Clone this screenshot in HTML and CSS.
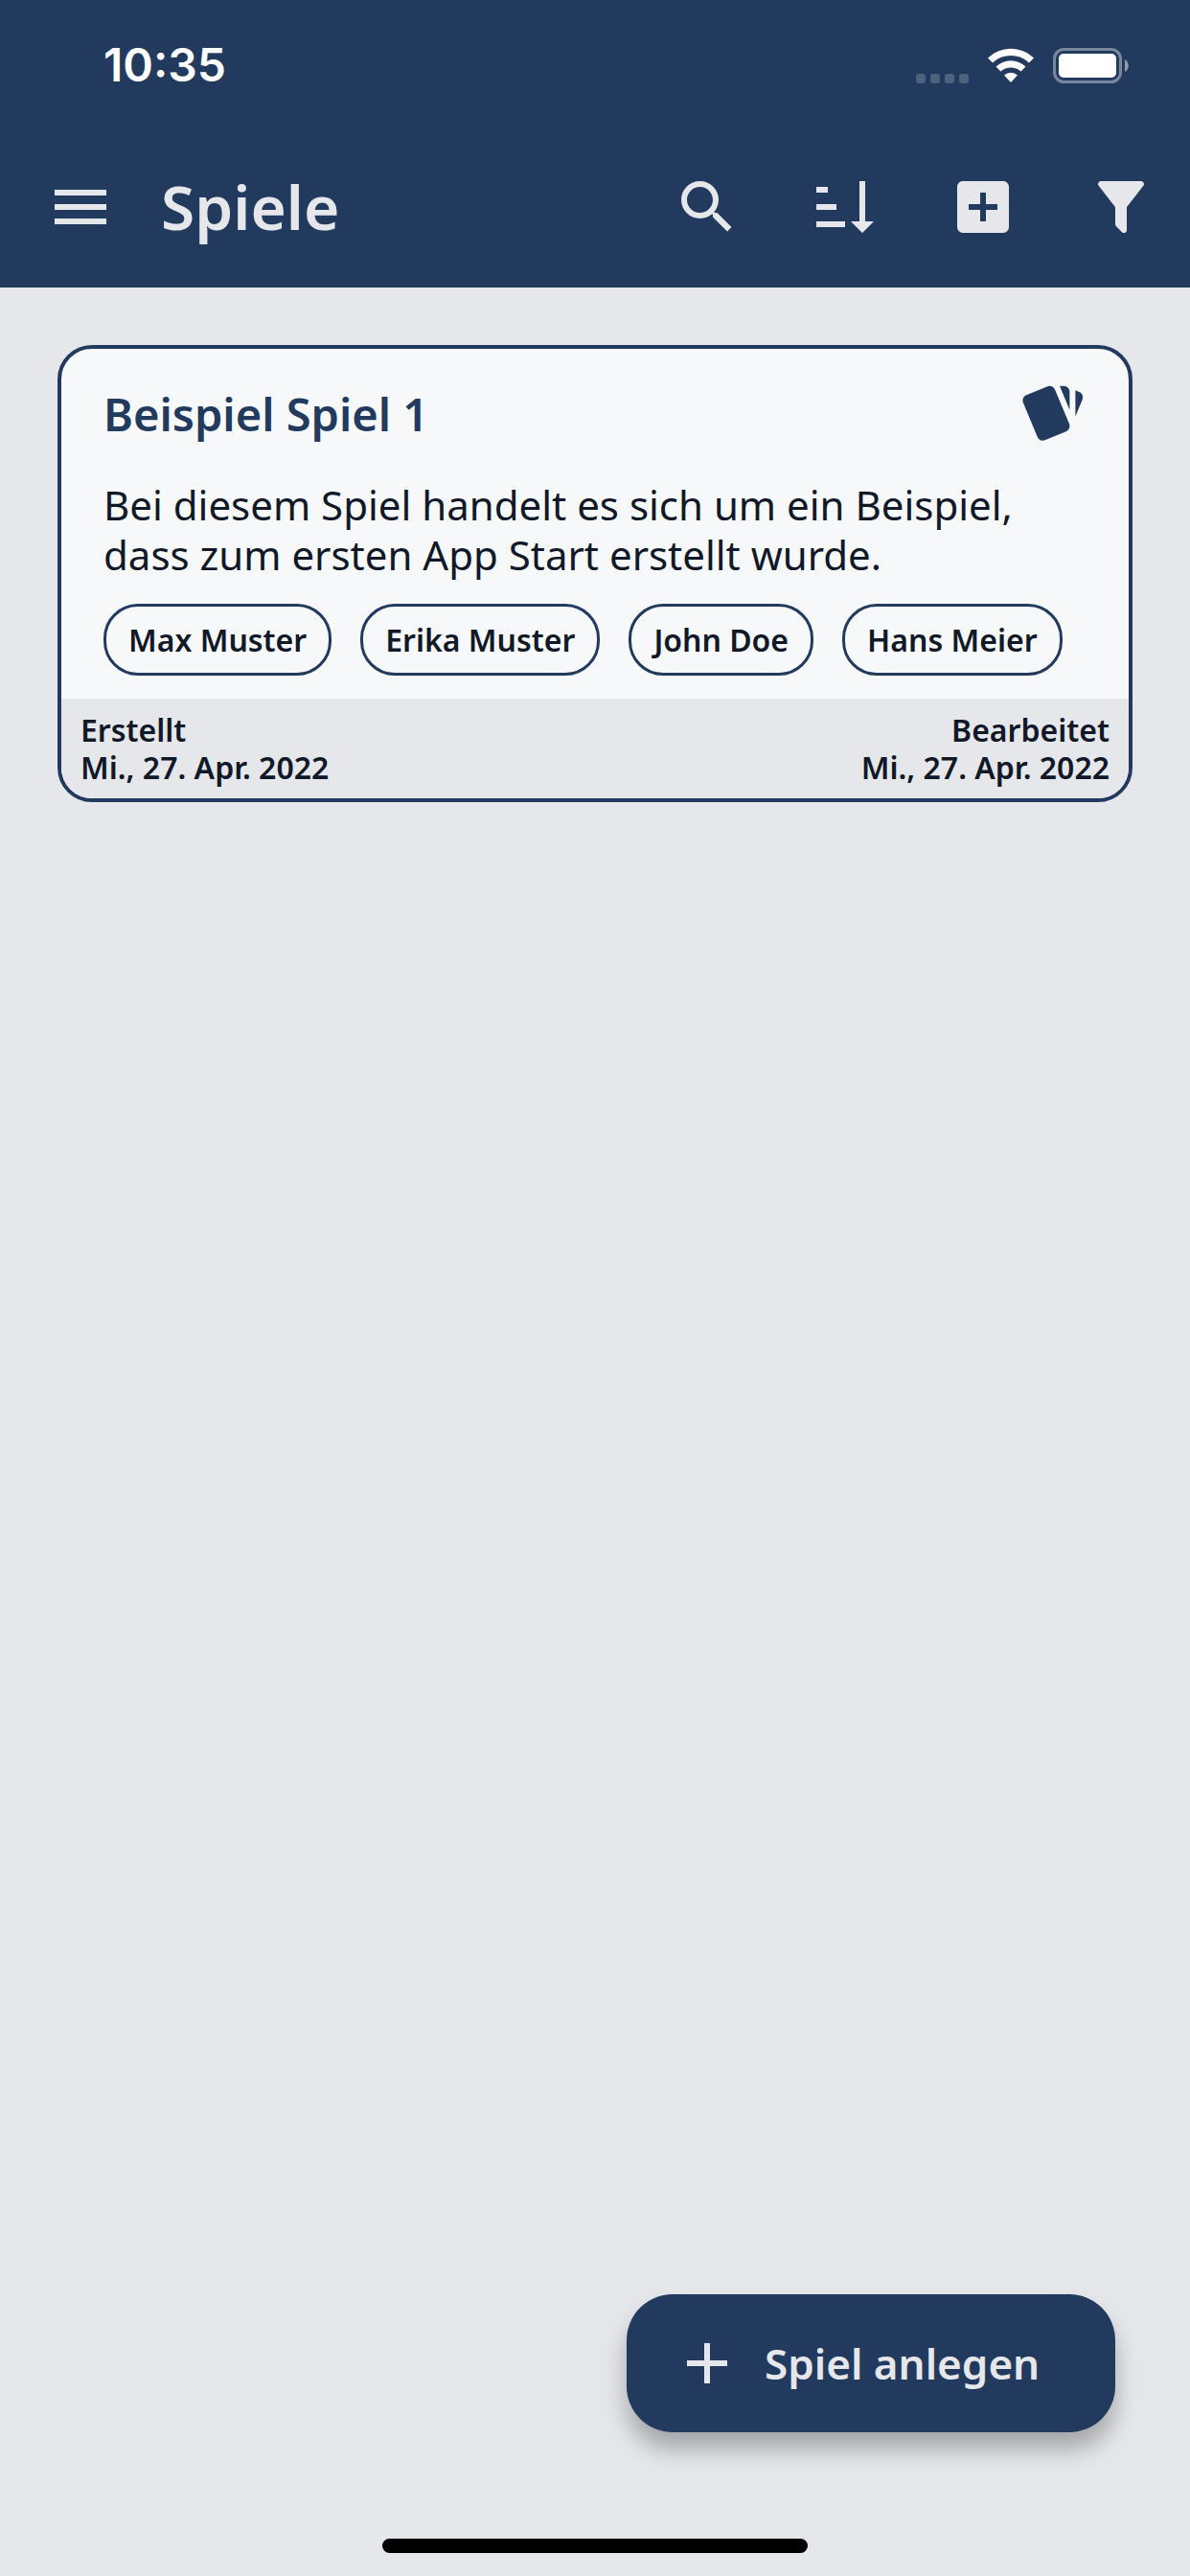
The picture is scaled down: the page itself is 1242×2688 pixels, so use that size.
FILE: index.html
```html
<!DOCTYPE html>
<html lang="de">
<head>
<meta charset="utf-8">
<meta name="viewport" content="width=device-width, initial-scale=1">
<title>Spiele</title>
<link rel="stylesheet" href="styles.css">
</head>
<body>
<div class="app">
  <header class="header">
    <div class="status">
      <time class="status-time">10:35</time>
      <div class="status-icons">
        <svg class="signal" viewBox="0 0 55 10" aria-hidden="true"><rect width="10" height="10" rx="3"/><rect x="15" width="10" height="10" rx="3"/><rect x="30" width="10" height="10" rx="3"/><rect x="45" width="10" height="10" rx="3"/></svg>
        <svg class="wifi" viewBox="0 0 48 37" aria-hidden="true"><path d="M0 10.500A34.500 34.500 0 0 1 48 10.500L43 15.500A27.500 27.500 0 0 0 5 15.500ZM8.500 19.500A22.500 22.500 0 0 1 39.500 19.500L34.500 24.500A15.500 15.500 0 0 0 13.500 24.500ZM17 28.500A10.500 10.500 0 0 1 31 28.500L24 36Z"/></svg>
        <svg class="battery" viewBox="0 0 79 37" aria-hidden="true"><rect class="battery-case" x="1.500" y="1.500" width="69" height="34" rx="10"/><rect x="6" y="6" width="60" height="25" rx="5"/><path class="battery-tip" d="M75 12C80 15 80 22 75 25Z"/></svg>
      </div>
    </div>
    <nav class="bar">
      <button class="icon-button" type="button" aria-label="Menü"><svg class="icon" viewBox="0 0 24 24"><path d="M3,6H21V8H3V6M3,11H21V13H3V11M3,16H21V18H3V16Z"/></svg></button>
      <h1 class="bar-title">Spiele</h1>
      <div class="bar-actions">
        <button class="icon-button" type="button" aria-label="Suchen"><svg class="icon" viewBox="0 0 24 24"><path d="M9.5,3A6.5,6.5 0 0,1 16,9.5C16,11.11 15.41,12.59 14.44,13.73L14.71,14H15.5L20.5,19L19,20.5L14,15.5V14.71L13.73,14.44C12.59,15.41 11.11,16 9.5,16A6.5,6.5 0 0,1 3,9.5A6.5,6.5 0 0,1 9.5,3M9.5,5C7,5 5,7 5,9.5C5,12 7,14 9.5,14C12,14 14,12 14,9.5C14,7 12,5 9.5,5Z"/></svg></button>
        <button class="icon-button" type="button" aria-label="Sortieren"><svg class="icon" viewBox="0 0 24 24"><path d="M19 17H22L18 21L14 17H17V3H19M2 17H12V19H2M6 5V7H2V5M2 11H9V13H2V11Z"/></svg></button>
        <button class="icon-button" type="button" aria-label="Hinzufügen"><svg class="icon" viewBox="0 0 24 24"><path d="M17,13H13V17H11V13H7V11H11V7H13V11H17M19,3H5C3.89,3 3,3.89 3,5V19A2,2 0 0,0 5,21H19A2,2 0 0,0 21,19V5C21,3.89 20.1,3 19,3Z"/></svg></button>
        <button class="icon-button" type="button" aria-label="Filtern"><svg class="icon" viewBox="0 0 24 24"><path d="M14,12V19.88C14.04,20.18 13.94,20.5 13.71,20.71C13.32,21.1 12.69,21.1 12.3,20.71L10.29,18.7C10.06,18.47 9.96,18.16 10,17.87V12H9.97L4.21,4.62C3.87,4.19 3.95,3.56 4.38,3.22C4.57,3.08 4.78,3 5,3V3H19V3C19.22,3 19.43,3.08 19.62,3.22C20.05,3.56 20.13,4.19 19.79,4.62L14.03,12H14Z"/></svg></button>
      </div>
    </nav>
  </header>

  <main class="content">
    <article class="card">
      <div class="card-body">
        <div class="card-head">
          <h2 class="card-title">Beispiel Spiel 1</h2>
          <svg class="icon" viewBox="0 0 24 24" aria-hidden="true"><path d="M21.47,4.35L20.13,3.79V12.82L22.56,6.96C22.97,5.94 22.5,4.77 21.47,4.35M1.97,8.05L6.93,20C7.24,20.77 7.97,21.24 8.74,21.26C9,21.26 9.27,21.21 9.53,21.1L16.9,18.05C17.65,17.74 18.11,17 18.13,16.26C18.14,16 18.09,15.71 18,15.45L13,3.5C12.71,2.73 11.97,2.26 11.19,2.25C10.93,2.25 10.67,2.31 10.42,2.4L3.06,5.45C2.04,5.87 1.55,7.04 1.97,8.05M18.12,4.25A2,2 0 0,0 16.12,2.25H14.67L18.12,10.59"/></svg>
        </div>
        <p class="card-text">Bei diesem Spiel handelt es sich um ein Beispiel, <br>dass zum ersten App Start erstellt wurde.</p>
        <ul class="chips">
          <li class="chip">Max Muster</li>
          <li class="chip">Erika Muster</li>
          <li class="chip">John Doe</li>
          <li class="chip">Hans Meier</li>
        </ul>
      </div>
      <footer class="card-footer">
        <div>Erstellt<br><time datetime="2022-04-27">Mi., 27. Apr. 2022</time></div>
        <div class="edited">Bearbeitet<br><time datetime="2022-04-27">Mi., 27. Apr. 2022</time></div>
      </footer>
    </article>
    <button class="fab" type="button"><svg class="icon" viewBox="0 0 24 24" aria-hidden="true"><path d="M19,13H13V19H11V13H5V11H11V5H13V11H19V13Z"/></svg>Spiel anlegen</button>
  </main>
  <div class="home-indicator"></div>
</div>
</body>
</html>
```
FILE: styles.css
```css
:root {
  --navy: #223a5e;
  --surface: #e5e7eb;
  --card: #f6f8fa;
  --ink: #111827;
}

* { box-sizing: border-box; }

body {
  margin: 0;
  background: var(--surface);
  color: var(--ink);
  font-family: "Noto Sans", sans-serif;
}

button {
  border: 0;
  color: inherit;
  font: inherit;
  cursor: pointer;
}

.app {
  display: flex;
  flex-direction: column;
  min-height: 100vh;
}

.icon {
  display: block;
  flex: none;
  width: 72px;
  height: 72px;
  fill: currentColor;
}

.header {
  background: var(--navy);
  color: var(--surface);
}

.status {
  display: flex;
  align-items: center;
  justify-content: space-between;
  height: 132px;
  padding: 4px 64px 0 108px;
  color: #fff;
  fill: currentColor;
}

.status-time {
  font: 600 48px/64px Inter, sans-serif;
}

.status-icons {
  display: flex;
  align-items: flex-end;
  gap: 20px;
}

.signal { width: 55px; height: 10px; opacity: .2; }
.wifi { width: 48px; height: 37px; }
.battery { width: 79px; height: 37px; }
.battery-case { fill: none; stroke: currentColor; stroke-width: 3px; opacity: .4; }
.battery-tip { opacity: .5; }

.bar {
  display: flex;
  align-items: center;
  height: 168px;
  padding: 0 36px 0 48px;
}

.icon-button {
  padding: 0;
  background: none;
}

.bar-title {
  margin: 0 0 0 48px;
  font-size: 64px;
  line-height: 80px;
  font-weight: 600;
}

.bar-actions {
  display: flex;
  gap: 72px;
  margin-left: auto;
}

.content {
  display: flex;
  flex: 1;
  flex-direction: column;
  justify-content: space-between;
  gap: 60px;
  padding: 60px 60px 111px;
}

.card {
  overflow: hidden;
  border: 4px solid var(--navy);
  border-radius: 36px;
  background: var(--card);
}

.card-body { padding: 32px 44px 24px; }

.card-head {
  display: flex;
  align-items: center;
  justify-content: space-between;
  color: var(--navy);
}

.card-title {
  margin: 0;
  font-size: 47px;
  line-height: 64px;
  font-weight: 600;
}

.card-text {
  margin: 33px 0 25px;
  font-size: 42px;
  line-height: 52px;
}

.chips {
  display: flex;
  flex-wrap: wrap;
  gap: 30px;
  margin: 0;
  padding: 0;
  list-style: none;
}

.chip {
  padding: 15px 23px;
  border: 3px solid var(--navy);
  border-radius: 36px;
  font-size: 32px;
  line-height: 39px;
  font-weight: 600;
}

.card-footer {
  display: flex;
  justify-content: space-between;
  padding: 13px 20px;
  background: var(--surface);
  font-size: 32px;
  line-height: 39px;
  font-weight: 600;
}

.edited { text-align: right; }

.fab {
  display: flex;
  align-self: flex-end;
  align-items: center;
  gap: 24px;
  min-width: 510px;
  height: 144px;
  margin-right: 18px;
  padding: 0 60px 0 48px;
  border-radius: 48px;
  background: var(--navy);
  color: var(--surface);
  font-size: 44px;
  font-weight: 600;
  box-shadow: 0 18px 24px rgba(0, 0, 0, .28);
}

.home-indicator {
  align-self: center;
  width: 444px;
  height: 15px;
  margin-bottom: 24px;
  border-radius: 8px;
  background: #000;
}
```
